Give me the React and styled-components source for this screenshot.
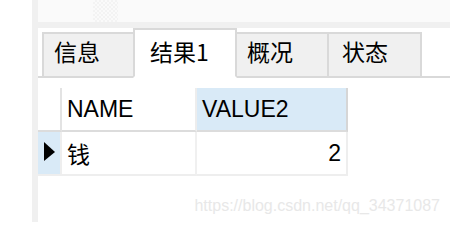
import React from "react";
import styled, { createGlobalStyle } from "styled-components";

const GlobalStyle = createGlobalStyle`
  html, body {
    margin: 0;
    padding: 0;
    background: #ffffff;
  }
  body {
    font-family: "Liberation Sans", "Noto Sans CJK SC", sans-serif;
    color: #000000;
  }
`;

const Screen = styled.div`
  position: relative;
  display: flex;
  width: 450px;
  height: 222px;
  overflow: hidden;
  background: #ffffff;
`;

const Gutter = styled.div`
  width: 32px;
  flex: none;
  background: #ffffff;
`;

const Splitter = styled.div`
  width: 6px;
  flex: none;
  background: #f0f0f0;
`;

const Main = styled.div`
  flex: 1;
  display: flex;
  flex-direction: column;
`;

const Toolbar = styled.div`
  height: 22px;
  display: flex;
  padding-left: 55px;
  background: #fafafa;
`;

const Grip = styled.div`
  width: 25px;
  background: repeating-conic-gradient(#f3f3f3 0 25%, #fafafa 0 50%) 0 0 / 4px 4px;
`;

const Band = styled.div`
  height: 6px;
  background: #f0f0f0;
`;

const TabStrip = styled.div`
  height: 48px;
  display: flex;
  align-items: flex-end;
  padding-left: 4px;
  border-bottom: 2px solid #d9d9d9;
  background: #ffffff;
`;

const Tab = styled.div`
  box-sizing: border-box;
  width: ${(p) => p.$width}px;
  height: ${(p) => (p.$active ? 50 : 46)}px;
  margin-bottom: -2px;
  margin-left: ${(p) => (p.$first ? 0 : -2)}px;
  padding: ${(p) => (p.$active ? 9 : 5)}px 0 0 ${(p) => p.$pad}px;
  border: 2px solid #d9d9d9;
  border-bottom-color: ${(p) => (p.$active ? "#ffffff" : "#d9d9d9")};
  background: ${(p) => (p.$active ? "#ffffff" : "#f0f0f0")};
  position: relative;
  z-index: ${(p) => (p.$active ? 1 : 0)};
  font-family: "Noto Sans CJK SC", "Liberation Sans", sans-serif;
  font-size: 23px;
  line-height: 24px;
  white-space: nowrap;
`;

const Grid = styled.div`
  display: grid;
  grid-template-columns: 24px 135px 151px;
  margin-top: 10px;
`;

const Cell = styled.div`
  box-sizing: border-box;
  height: 44px;
  display: flex;
  align-items: center;
  justify-content: ${(p) => (p.$right ? "flex-end" : "flex-start")};
  padding: 0 ${(p) => (p.$right ? 5 : 0)}px 0 ${(p) => (p.$right ? 0 : 5)}px;
  background: ${(p) => (p.$selected ? "#d9eaf7" : "#ffffff")};
  border-right: 2px solid ${(p) => p.$line};
  border-bottom: 2px solid ${(p) => p.$rowLine};
  font-size: 23px;
  font-family: ${(p) =>
    p.$cjk
      ? '"Noto Sans CJK SC", "Liberation Sans", sans-serif'
      : '"Liberation Sans", "Noto Sans CJK SC", sans-serif'};
`;

const Indicator = styled.div`
  width: 0;
  height: 0;
  margin: 0 0 3px 1px;
  border-top: 10px solid transparent;
  border-bottom: 9px solid transparent;
  border-left: 11px solid #000000;
`;

const Watermark = styled.div`
  position: absolute;
  right: 10px;
  bottom: 7px;
  font-family: "Liberation Sans", sans-serif;
  font-size: 16px;
  color: #e8e8e8;
  white-space: nowrap;
`;

const tabs = [
  { label: "信息", width: 93, pad: 10 },
  { label: "结果1", width: 104, pad: 15, active: true },
  { label: "概况", width: 94, pad: 10 },
  { label: "状态", width: 95, pad: 13 }
];

export default function App() {
  return (
    <Screen>
      <GlobalStyle />
      <Gutter />
      <Splitter />
      <Main>
        <Toolbar>
          <Grip />
        </Toolbar>
        <Band />
        <TabStrip>
          {tabs.map((t, i) => (
            <Tab
              key={t.label}
              $first={i === 0}
              $active={t.active}
              $width={t.width}
              $pad={t.pad}
            >
              {t.label}
            </Tab>
          ))}
        </TabStrip>

        <Grid>
          <Cell $line="#e3e3e3" $rowLine="#dcdcdc" />
          <Cell $line="#ededed" $rowLine="#dcdcdc">NAME</Cell>
          <Cell $selected $line="#d6d6d6" $rowLine="#dcdcdc">
            VALUE2
          </Cell>

          <Cell $selected $line="#eeeeee" $rowLine="#eeeeee">
            <Indicator />
          </Cell>
          <Cell $cjk $line="#f0f0f0" $rowLine="#eeeeee">
            钱
          </Cell>
          <Cell $right $line="#eeeeee" $rowLine="#eeeeee">
            2
          </Cell>
        </Grid>
      </Main>
      <Watermark>https://blog.csdn.net/qq_34371087</Watermark>
    </Screen>
  );
}
